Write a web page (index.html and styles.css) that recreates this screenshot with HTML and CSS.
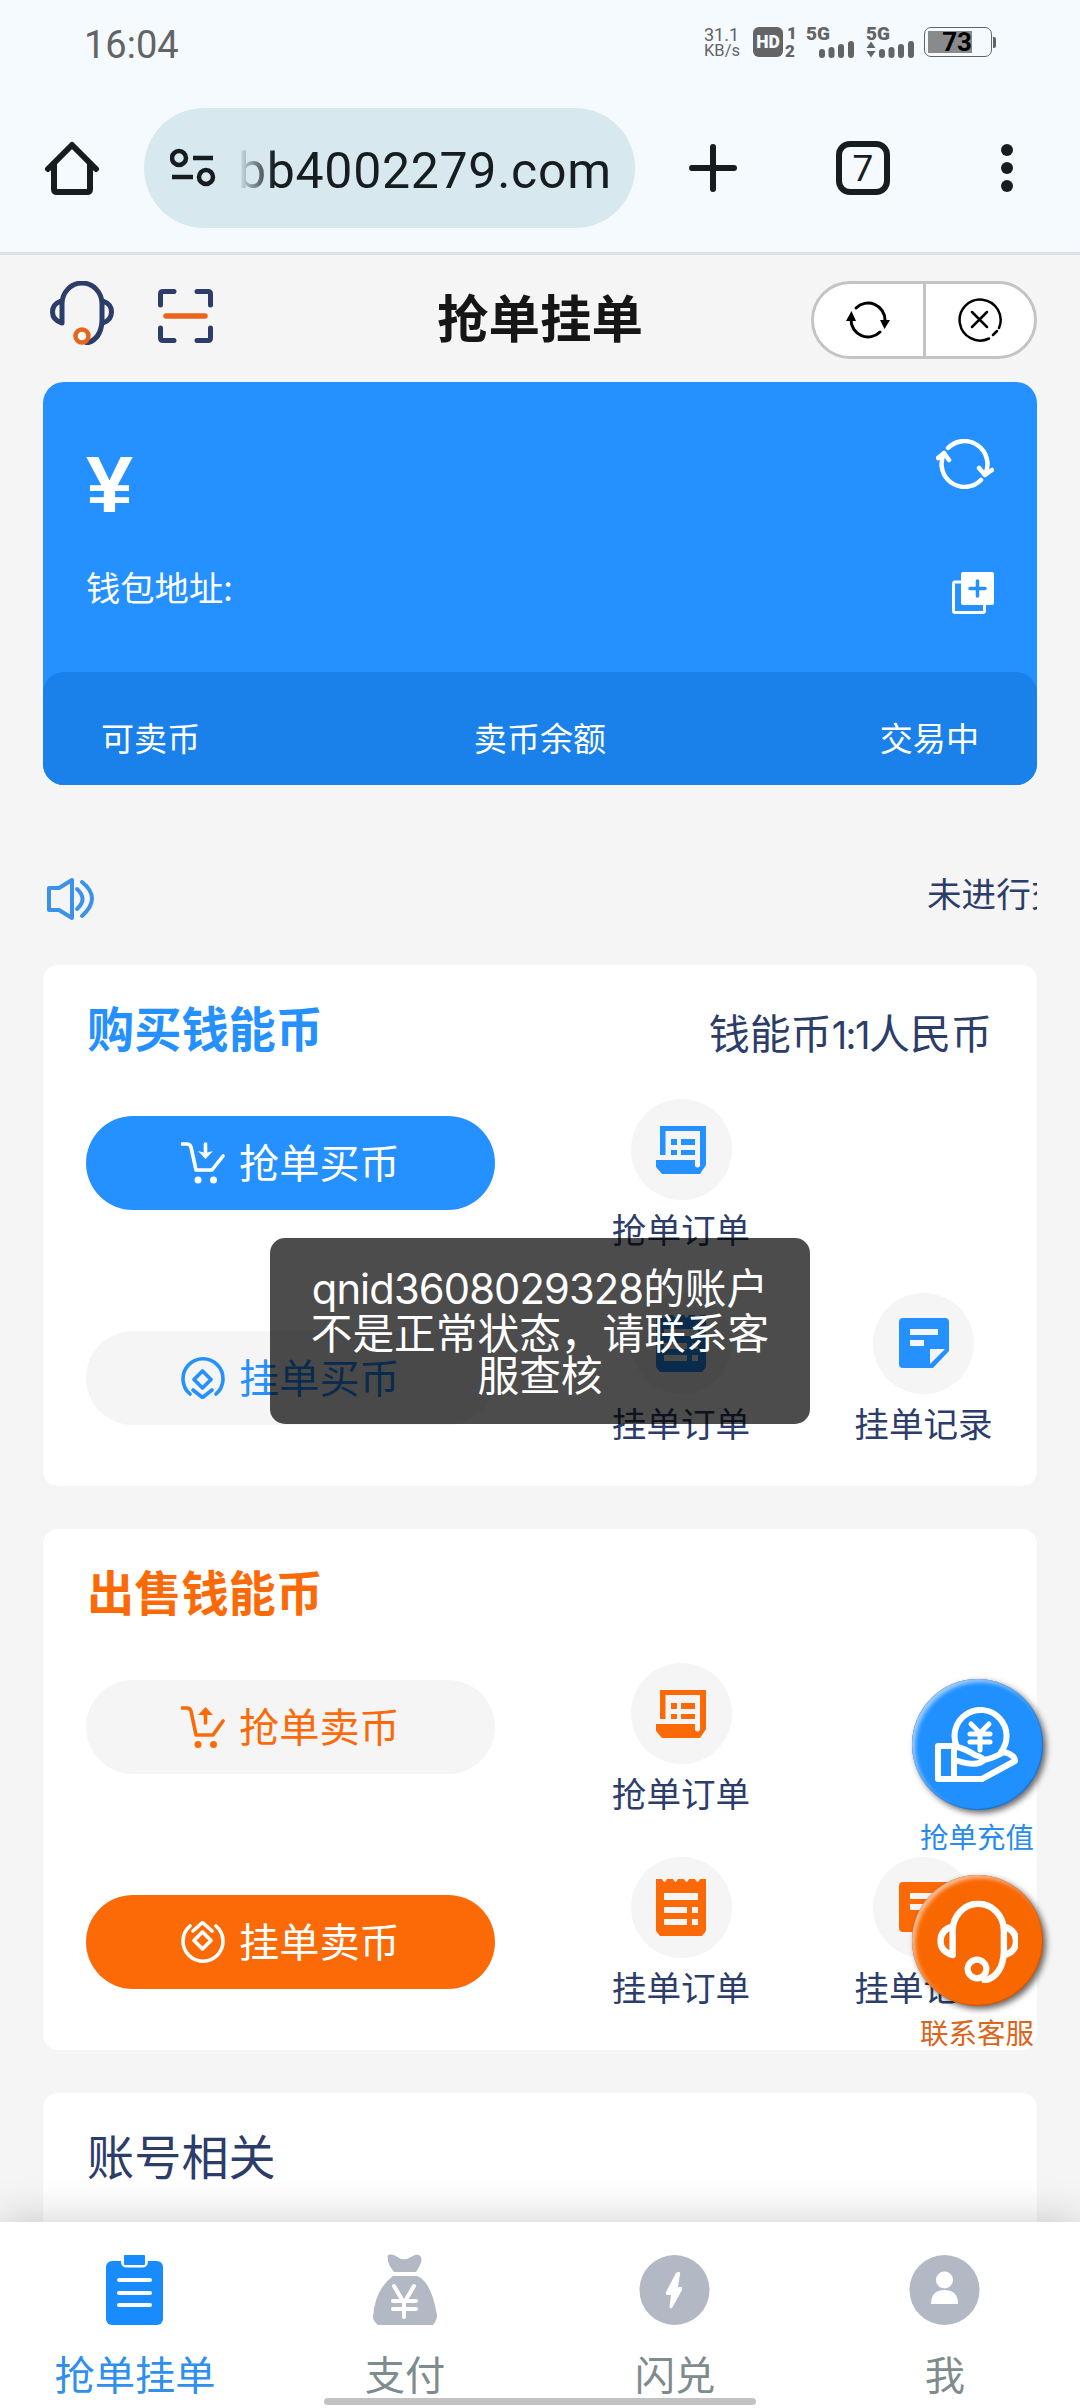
FILE: index.html
```html
<!DOCTYPE html>
<html lang="zh-CN">
<head>
<meta charset="utf-8">
<title>抢单挂单</title>
<link rel="stylesheet" href="styles.css">
</head>
<body>
<svg class="sprite" aria-hidden="true">
  <symbol id="receipt" viewBox="0 0 50 48">
    <path fill="currentColor" d="M4 0H50V39L44 48H6L0 41V34H39V40Q41.500 43 44 40V5H9.500V29H4Z"/>
    <path fill="currentColor" d="M15 13h6v6h-6zM25 13h14v6H25zM15 24h6v5h-6zM25 24h14v5H25z"/>
  </symbol>
  <symbol id="bill" viewBox="0 0 50 57">
    <path fill="currentColor" fill-rule="evenodd" d="M0 0H6Q8.500 6 11 0H17Q19.500 6 22 0H28Q30.500 6 33 0H39Q41.500 6 44 0H50V52L46 57H4L0 52ZM8 14V21H42V14ZM8 28V34H31V28ZM36 28V34H42V28ZM8 40V46H31V40ZM36 40V46H42V40Z"/>
  </symbol>
  <symbol id="note" viewBox="0 0 50 50">
    <path fill="currentColor" fill-rule="evenodd" d="M4 0H46Q50 0 50 4V33L34 50H4Q0 50 0 46V4Q0 0 4 0ZM11 11V17H39V11ZM11 22V28H25V22ZM31 31V46L46 31Z"/>
  </symbol>
  <symbol id="headset" viewBox="0 0 64 64">
    <path d="M12 42V23A20 21 0 0 1 52 23V40Q51 58 37 62M11 20Q2.500 23 2.500 31T12 42M53 20Q61.500 23 61.500 31T53 42"/>
  </symbol>
</svg>

<header class="browser">
  <div class="status">
    <span class="clock">16:04</span>
    <div class="indicators">
      <div class="speed"><span>31.1</span><span>KB/s</span></div>
      <div class="hd"><b>HD</b></div>
      <div class="sims"><span>1</span><span>2</span></div>
      <div class="cell"><span>5G</span>
        <svg class="bars" width="48" height="17" viewBox="0 0 48 17"><path d="M16 11V14M25.500 9V14M35 6V14M45 3V14"/></svg>
      </div>
      <div class="cell"><span>5G</span>
        <svg class="bars" width="48" height="17" viewBox="0 0 48 17"><path d="M16 11V14M25.500 9V14M35 6V14M45 3V14"/><path class="solid" d="M0.500 7L5 0.500L9.500 7ZM0.500 10H9.500L5 16.500Z"/></svg>
      </div>
      <div class="battery"><span>73</span></div>
    </div>
  </div>
  <div class="toolbar">
    <svg class="home" width="56" height="56" viewBox="0 0 56 56"><path d="M4 29L28 5L52 29M10 24V49Q10 52 13 52H43Q46 52 46 49V24"/></svg>
    <div class="address">
      <svg class="tune" width="46" height="40" viewBox="0 0 46 40"><circle cx="9" cy="10" r="7"/><circle cx="36" cy="29" r="7"/><path d="M23 10H43M2 29H23"/></svg>
      <span class="url">bb4002279.com</span>
    </div>
    <svg class="plus" width="48" height="48" viewBox="0 0 48 48"><path d="M24 3V45M3 24H45"/></svg>
    <div class="tabs">7</div>
    <svg class="more" width="12" height="48" viewBox="0 0 12 48"><circle cx="6" cy="6" r="6"/><circle cx="6" cy="24" r="6"/><circle cx="6" cy="42" r="6"/></svg>
  </div>
</header>

<main class="page">
  <div class="titlebar">
    <div class="tools">
      <svg class="service" width="64" height="64" viewBox="0 0 64 64"><use href="#headset"/><circle cx="32" cy="55" r="6.500"/></svg>
      <svg class="scan" width="55" height="54" viewBox="0 0 55 54"><path d="M2.500 16V5Q2.500 2.500 5 2.500H16M39 2.500H50Q52.500 2.500 52.500 5V16M52.500 39V49Q52.500 51.500 50 51.500H39M16 51.500H5Q2.500 51.500 2.500 49V39"/><path class="beam" d="M8 27H47"/></svg>
    </div>
    <h1>抢单挂单</h1>
    <div class="capsule">
      <div><svg width="44" height="40" viewBox="0 0 44 40"><path d="M10 8A17 17 0 0 1 39 20M34 32A17 17 0 0 1 5 20"/><path class="solid" d="M0 21L5.500 11L10 21ZM34 20H44L38.500 29Z"/></svg></div>
      <div><svg width="44" height="44" viewBox="0 0 44 44"><path class="thin" d="M41 30A20.500 20.500 0 1 0 31 40.500M35 37L39 33M14 14L29 29M29 14L14 29"/></svg></div>
    </div>
  </div>

  <section class="wallet">
    <div class="wallet-main">
      <div class="wallet-row"><span class="yen">¥</span>
        <svg class="refresh" width="58" height="50" viewBox="0 0 58 50"><path d="M12 9A23 23 0 0 1 49.200 35M45 41A23 23 0 0 1 7.800 15M2 19L8 14L13 21M43 29L49 36L56 31"/></svg>
      </div>
      <div class="wallet-row address-row"><span>钱包地址:</span>
        <svg class="copy" width="42" height="42" viewBox="0 0 42 42"><path class="frame" d="M9 10H3Q1.500 10 1.500 12V39Q1.500 40.500 3 40.500H31Q32.500 40.500 32.500 39V33"/><rect x="9" width="33" height="33" rx="2"/><path class="cross" d="M25.500 9V24M18 16.500H33"/></svg>
      </div>
    </div>
    <div class="wallet-stats"><span>可卖币</span><span>卖币余额</span><span>交易中</span></div>
  </section>

  <div class="notice">
    <svg width="48" height="46" viewBox="0 0 48 46"><path d="M2 12H12L25 4V42L12 34H2ZM30 13Q41 23 30 33M35 6Q55 22 35 40"/></svg>
    <div class="marquee"><span>未进行交</span></div>
  </div>

  <section class="card buy">
    <div class="card-head"><h2>购买钱能币</h2><span>钱能币<em>1:1</em>人民币</span></div>
    <div class="card-body">
      <div class="actions">
        <div class="pill filled">
          <svg width="44" height="42" viewBox="0 0 44 42"><path d="M1 2H6Q9 2 10 5L15 28H31L42 14"/><path d="M24.500 2V10"/><path class="solid" d="M17 9L24.500 11L32 9L24.500 17Z"/><circle class="solid" cx="17" cy="38" r="3.500"/><circle class="solid" cx="32.500" cy="38" r="3.500"/></svg>
          抢单买币
        </div>
        <div class="pill">
          <svg width="44" height="42" viewBox="0 0 44 42"><path d="M9 37A20 20 0 1 1 35 37M21.500 14L30 22.500L21.500 31L13 22.500ZM12 33L21.500 40.500L31 33"/></svg>
          挂单买币
        </div>
      </div>
      <div class="links">
        <div class="link"><i><svg width="50" height="48"><use href="#receipt"/></svg></i>抢单订单</div>
        <div class="link second"><i><svg width="50" height="57"><use href="#bill"/></svg></i>挂单订单</div>
        <div class="link second"><i><svg width="50" height="50"><use href="#note"/></svg></i>挂单记录</div>
      </div>
    </div>
  </section>

  <section class="card sell">
    <div class="card-head"><h2>出售钱能币</h2></div>
    <div class="card-body">
      <div class="actions">
        <div class="pill">
          <svg width="44" height="42" viewBox="0 0 44 42"><path d="M1 2H6Q9 2 10 5L15 29H32L42 15"/><path d="M24.500 8V17"/><path class="solid" d="M17 9L24.500 1L32 9Z"/><circle class="solid" cx="17" cy="38.500" r="3.500"/><circle class="solid" cx="32.500" cy="38.500" r="3.500"/></svg>
          抢单卖币
        </div>
        <div class="pill filled">
          <svg width="44" height="42" viewBox="0 0 44 42"><path d="M9 5A20 20 0 1 0 35 5M21.500 11L30 19.500L21.500 28L13 19.500ZM12 10L21.500 1.500L31 10"/></svg>
          挂单卖币
        </div>
      </div>
      <div class="links">
        <div class="link"><i><svg width="50" height="48"><use href="#receipt"/></svg></i>抢单订单</div>
        <div class="link second"><i><svg width="50" height="57"><use href="#bill"/></svg></i>挂单订单</div>
        <div class="link second"><i><svg width="50" height="50"><use href="#note"/></svg></i>挂单记录</div>
      </div>
    </div>
  </section>

  <section class="card account">
    <div class="card-head"><h2>账号相关</h2></div>
  </section>
</main>

<div class="toast"><span class="uid">qnid3608029328</span>的账户<br>不是正常状态，请联系客<br>服查核</div>

<aside class="floats">
  <div class="float recharge">
    <i><svg width="84" height="76" viewBox="0 0 84 76"><path d="M3 39H19V72H3ZM19 39Q31 42 40 48Q49 51 49 53Q43 60 23 54M49 53Q59 51 69 45Q80 48 80 54L47 72H19M22 40A26 26 0 1 1 66 45"/><path class="coin" d="M36 17L45 26L54 17M35 27H55M35 35H55M45 26V43"/></svg></i>
    抢单充值
  </div>
  <div class="float contact">
    <i><svg width="82" height="84" viewBox="-1 -1 66 67"><use href="#headset"/><circle cx="32" cy="55" r="7.500"/></svg></i>
    联系客服
  </div>
</aside>

<nav class="tabbar">
  <div class="tab active">
    <svg width="72" height="72" viewBox="0 0 72 72"><rect x="7" y="7" width="57" height="64" rx="6"/><path class="cut edge" d="M23.500 4V8Q24 12 28 12H43Q47 12 47.500 8V4"/><path class="cut" d="M20 26H51M20 39H51M20 51H51"/><rect x="25" y="1" width="21" height="10" rx="1"/></svg>
    抢单挂单
  </div>
  <div class="tab">
    <svg width="72" height="72" viewBox="0 0 72 72"><path d="M19 1Q24 -1 30 4Q36 7 42 3Q49 -2 52 3Q54 8 47 18H25Q17 8 19 1ZM24 22H48C59 26 65 43 68 61Q68 66 64 71H9Q4 67 4 63Q6 35 24 22Z"/><path class="cut" d="M25 32L35 49L45 32M24 47H47M24 55H47M35 48V63"/></svg>
    支付
  </div>
  <div class="tab">
    <svg width="72" height="72" viewBox="0 0 72 72"><circle cx="35.500" cy="36" r="35"/><path class="white" d="M39 18Q42 18 41 20L39 33H43L43 36L33 54Q31 55 30.500 53L32 41H27L27 38L37 19Z"/></svg>
    闪兑
  </div>
  <div class="tab">
    <svg width="72" height="72" viewBox="0 0 72 72"><circle cx="35.500" cy="36" r="35"/><circle class="white" cx="35.500" cy="26" r="8.500"/><path class="white" d="M22 50Q22 36 35.500 36T49 50Z"/></svg>
    我
  </div>
  <div class="gesture"></div>
</nav>
</body>
</html>
```

FILE: styles.css
```css
* { box-sizing: border-box; }

body {
  margin: 0;
  position: relative;
  width: 1080px;
  height: 2408px;
  overflow: hidden;
  background: #f5f5f5;
  font-family: "Noto Sans CJK SC", sans-serif;
  color: #2d3d6a;
}

h1, h2 { margin: 0; }
i, em { font-style: normal; }
svg { display: block; flex: none; fill: none; stroke: currentColor; stroke-linecap: round; stroke-linejoin: round; }
.solid { fill: currentColor; stroke: none; }
.sprite { position: absolute; width: 0; height: 0; }

/* browser chrome */
.browser {
  height: 255px;
  background: #f5faff;
  border-bottom: 3px solid #dce3e8;
  font-family: Roboto, sans-serif;
}

.status {
  display: flex;
  justify-content: space-between;
  height: 84px;
  padding: 27px 84px 0;
  color: #626466;
}
.clock { font-size: 38px; line-height: 36px; }
.indicators { display: flex; height: 30px; }
.speed {
  display: flex;
  flex-direction: column;
  width: 49px;
  font-size: 16.500px;
  line-height: 16px;
}
.speed span:first-child { font-size: 18px; }
.hd {
  width: 30px;
  border-radius: 6px;
  background: #626466;
  color: #f5faff;
  font-size: 17.500px;
  line-height: 31px;
  text-align: center;
}
.hd b { font-weight: 900; }
.sims {
  display: flex;
  flex-direction: column;
  width: 23px;
  padding-left: 2px;
  font-size: 17px;
  font-weight: 900;
  line-height: 13px;
}
.sims span:first-child { padding-left: 2px; }
.sims span:last-child { margin-top: 5px; }
.cell {
  width: 60px;
  font-size: 19px;
  font-weight: 900;
  line-height: 14px;
}
.cell:nth-of-type(5) { width: 58px; }
.cell span { display: block; }
.bars { stroke-width: 6; }
.battery {
  position: relative;
  width: 68px;
  margin-right: 4px;
  padding: 3px;
  border: 1.500px solid #626466;
  border-radius: 7px;
  color: #000;
}
.battery::after {
  content: "";
  position: absolute;
  top: 9px;
  right: -5px;
  width: 3px;
  height: 11px;
  border-radius: 0 2px 2px 0;
  background: #626466;
}
.battery span {
  display: block;
  width: 44px;
  height: 22px;
  background: #888a8c;
  font-size: 26px;
  font-weight: 700;
  line-height: 23px;
  text-align: right;
}

.toolbar {
  display: flex;
  align-items: center;
  height: 168px;
  padding: 0 66px 0 44px;
  color: #171c1f;
}
.home { stroke-width: 6; }
.address {
  display: flex;
  align-items: center;
  width: 491px;
  height: 120px;
  margin-left: 44px;
  padding-left: 26px;
  border-radius: 60px;
  background: #d8e8ef;
}
.tune { stroke-width: 4.500; stroke-linecap: butt; }
.url {
  margin: 6px 0 0 22px;
  font-size: 50px;
  letter-spacing: 0.700px;
  -webkit-mask-image: linear-gradient(to right, transparent, #000 36px);
  mask-image: linear-gradient(to right, transparent, #000 36px);
}
.plus { margin-left: 54px; stroke-width: 6; }
.tabs {
  width: 54px;
  height: 54px;
  margin-left: 99px;
  border: 6px solid currentColor;
  border-radius: 14px;
  font-size: 37px;
  line-height: 43px;
  text-align: center;
}
.more { margin-left: 111px; }
.more circle { fill: currentColor; stroke: none; }

/* page */
.page { padding: 0 43px; }

.titlebar {
  display: grid;
  grid-template-columns: 1fr auto 1fr;
  align-items: center;
  height: 127px;
}
.titlebar h1 {
  margin-top: -6px;
  color: #161616;
  font-size: 51.500px;
  line-height: 60px;
}
.tools { display: flex; align-items: center; gap: 44px; padding: 0 0 12px 7px; }
.service { stroke-width: 5; }
.service circle { stroke: #ea641c; fill: #fff; stroke-width: 4.500; }
.scan { margin-top: 7px; stroke-width: 5; }
.scan .beam { stroke: #ea641c; stroke-width: 5.500; }
.capsule {
  display: flex;
  justify-self: end;
  width: 226px;
  height: 78px;
  margin-top: 3px;
  border: 3px solid #c4c4c4;
  border-radius: 39px;
  background: #fff;
  color: #000;
}
.capsule div { display: flex; flex: 1; align-items: center; justify-content: center; }
.capsule div + div { border-left: 3px solid #c4c4c4; }
.capsule svg { stroke-width: 3; }
.capsule .thin { stroke-width: 2.500; }

.wallet { height: 403px; border-radius: 21px; background: #2590ff; color: #fff; }
.wallet-main { height: 290px; padding: 57px 43px 0; }
.wallet-row { display: flex; justify-content: space-between; height: 110px; }
.yen {
  font-family: "Liberation Sans", sans-serif;
  font-size: 79px;
  font-weight: 700;
  line-height: 92px;
  transform: scaleX(1.07);
  transform-origin: left;
}
.refresh { stroke-width: 4.500; }
.address-row { height: 60px; margin-top: 22px; font-size: 34.300px; line-height: 30px; }
.copy { margin-top: 1px; }
.copy .frame { stroke-width: 3; }
.copy rect { fill: #fff; stroke: none; }
.copy .cross { stroke: #2590ff; stroke-width: 3.500; }
.wallet-stats {
  display: flex;
  justify-content: space-between;
  height: 113px;
  padding: 38px 58px 0;
  border-radius: 21px;
  background: #1a80ea;
  font-size: 33.100px;
  line-height: 54px;
}

.notice {
  display: flex;
  align-items: center;
  justify-content: space-between;
  height: 180px;
  padding: 48px 0 0 4px;
}
.notice svg { stroke: #3a92ea; stroke-width: 4; }
.marquee {
  width: 109px;
  margin-top: -15px;
  overflow: hidden;
  font-size: 34.600px;
  line-height: 50px;
  white-space: nowrap;
}
.marquee span { margin-left: -1px; }

.card {
  height: 521px;
  margin-bottom: 43px;
  padding: 32px 43px 0;
  border-radius: 15px;
  background: #fff;
}
.card-head { display: flex; justify-content: space-between; height: 102px; line-height: 60px; }
.card-head h2 { margin-left: 1px; font-size: 47.200px; }
.card-head span { margin: 4px 2px 0 0; font-size: 41px; }
.card-head em { font-family: Inter, sans-serif; font-size: 38px; letter-spacing: -1.500px; }
.card-body { display: flex; gap: 96px; }
.actions { display: flex; flex-direction: column; gap: 121px; padding-top: 17px; }
.pill {
  display: flex;
  align-items: center;
  gap: 14px;
  width: 409px;
  height: 94px;
  padding: 0 0 5px 95px;
  border-radius: 47px;
  background: #f5f5f5;
  font-size: 40.200px;
}
.pill svg { margin-top: 5px; stroke-width: 3.600; }
.links {
  display: grid;
  grid-template-columns: 180px 180px;
  grid-template-rows: 154px 154px;
  gap: 39.500px 62.500px;
}
.link {
  display: flex;
  flex-direction: column;
  align-items: center;
  gap: 3px;
  font-size: 34.600px;
  line-height: 50px;
}
.link.second { grid-row: 2; }
.link i {
  display: flex;
  align-items: center;
  justify-content: center;
  width: 101px;
  height: 101px;
  border-radius: 50%;
  background: #f5f5f5;
}
.link svg { stroke: none; }

.buy h2, .buy .pill, .buy i { color: #2590ff; }
.buy .filled { background: #2590ff; color: #fff; }
.sell h2, .sell .pill, .sell i { color: #fc6a08; }
.sell .filled { background: #fc6a08; color: #fff; }
.account { height: 300px; margin-bottom: 0; }
.account h2 { font-weight: 400; }

/* overlays */
.toast {
  position: absolute;
  top: 1238px;
  left: 270px;
  width: 540px;
  height: 186px;
  padding-top: 27px;
  border-radius: 15px;
  background: rgba(0, 0, 0, .7);
  color: #fff;
  font-size: 41.700px;
  line-height: 42px;
  text-align: center;
  white-space: nowrap;
}
.uid { font-family: Inter, sans-serif; letter-spacing: -0.900px; }

.floats { position: absolute; top: 1679px; left: 897px; width: 160px; }
.float {
  display: flex;
  flex-direction: column;
  align-items: center;
  height: 196px;
  gap: 6px;
  font-size: 28.500px;
  line-height: 40px;
}
.float i {
  display: flex;
  align-items: center;
  justify-content: center;
  width: 131px;
  height: 131px;
  border-radius: 50%;
  color: #fff;
}
.float svg { stroke-width: 6; }
.recharge { color: #2a8cea; }
.recharge i { background: #2090ff; box-shadow: 3px 3px 6px rgba(0, 0, 0, .6), inset 3px 3px 4px rgba(255, 255, 255, .6), inset 0 0 1px 1px #1a6cc8; }
.recharge .coin { stroke-width: 5; }
.contact { color: #dc651c; }
.contact i { background: #f96700; box-shadow: 3px 3px 6px rgba(0, 0, 0, .6), inset 3px 3px 4px rgba(255, 255, 255, .6), inset 0 0 1px 1px #c85008; }
.contact svg { stroke-width: 5; }

.tabbar {
  position: absolute;
  top: 2222px;
  left: 0;
  display: flex;
  width: 1080px;
  height: 186px;
  padding-top: 32px;
  background: #fff;
  box-shadow: 0 0 43px rgba(0, 0, 0, .2);
  color: #7f8c8d;
}
.tab {
  display: flex;
  flex: 1;
  flex-direction: column;
  align-items: center;
  gap: 17px;
  font-size: 40.300px;
  line-height: 60px;
}
.tab svg { fill: #b2b9c5; stroke: none; }
.tab .cut { fill: none; stroke: #fff; stroke-width: 4; }
.tab .edge { stroke-width: 3; }
.tab .white { fill: #fff; }
.tab.active { color: #2f8fee; }
.active svg { fill: #188bff; }
.gesture {
  position: absolute;
  top: 176px;
  left: 324px;
  width: 432px;
  height: 7px;
  border-radius: 4px;
  background: #c2c2c2;
}
```
